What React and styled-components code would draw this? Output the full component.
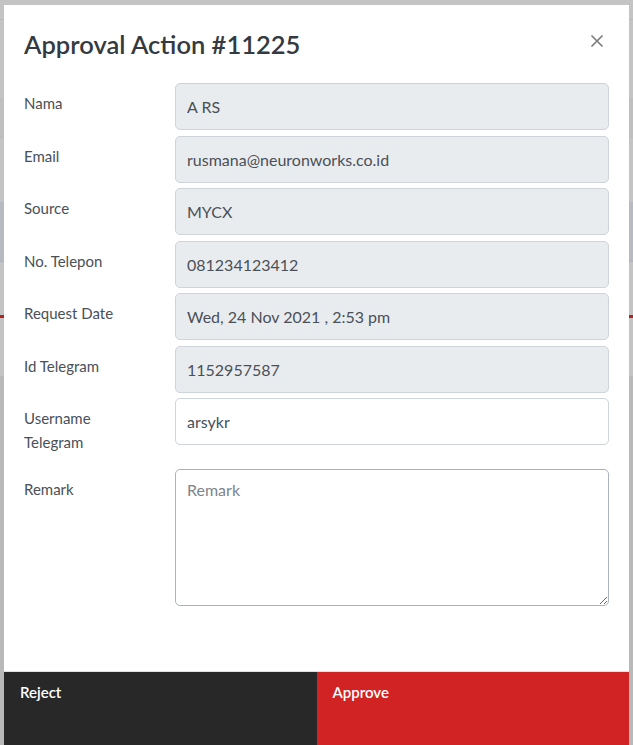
import React from "react";
import styled, { createGlobalStyle } from "styled-components";

const GlobalStyle = createGlobalStyle`
  html, body {
    margin: 0;
    padding: 0;
    background: #c4c4c4;
    font-family: Lato, "Open Sans", sans-serif;
    overflow: hidden;
  }
`;

// page behind the modal, seen through the backdrop
const Page = styled.div`
  height: 745px;
  display: flex;
  flex-direction: column;
`;

const Band = styled.div`
  height: ${(p) => p.h}px;
  background: ${(p) => p.bg || "#c4c4c4"};
  border-bottom: ${(p) => (p.line ? `${p.lineW || 1}px solid ${p.line}` : "none")};
  flex-shrink: 0;
`;

const Overlay = styled.div`
  position: fixed;
  top: 5px;
  left: 4px;
  width: 625px;
  bottom: -20px;
  background: #fff;
  display: flex;
  flex-direction: column;
`;

const Header = styled.div`
  display: flex;
  justify-content: space-between;
  align-items: flex-start;
  padding: 24px 20px 0 20px;
`;

const Title = styled.h2`
  margin: 0;
  font-size: 25.5px;
  line-height: 31px;
  font-weight: 600;
  color: #343a40;
`;

const CloseButton = styled.button`
  border: none;
  background: transparent;
  padding: 0;
  margin: 5px 5px 0 0;
  width: 14px;
  height: 14px;
  cursor: pointer;
  display: flex;
`;

const Body = styled.div`
  padding: 23px 20px 0 20px;
  display: flex;
  flex-direction: column;
  gap: 5.5px;
  flex: 1;
`;

const Row = styled.div`
  display: flex;
  align-items: flex-start;
`;

const Label = styled.label`
  width: 151px;
  flex-shrink: 0;
  padding: 8px 30px 9px 0;
  box-sizing: border-box;
  font-size: 15px;
  line-height: 24px;
  color: #495057;
`;

const Field = styled.input`
  width: 434px;
  height: 47px;
  box-sizing: border-box;
  padding: 0 11px;
  border: 1px solid #ced4da;
  border-radius: 5px;
  background: ${(p) => (p.readOnly ? "#e9ecef" : "#fff")};
  font-family: inherit;
  font-size: 16px;
  color: #495057;
  outline: none;
`;

const Area = styled.textarea`
  width: 434px;
  height: 137px;
  box-sizing: border-box;
  padding: 8px 11px;
  border: 1px solid #a9b4be;
  border-radius: 5px;
  font-family: inherit;
  font-size: 16px;
  line-height: 24px;
  color: #495057;
  outline: none;
  &::placeholder {
    color: #7d858c;
  }
`;

const Footer = styled.div`
  display: flex;
  border-top: 1px solid #dee2e6;
  height: 93px;
  flex-shrink: 0;
`;

const ActionButton = styled.button`
  flex: 1;
  border: none;
  background: ${(p) => p.bg};
  color: #fff;
  font-family: inherit;
  font-size: 15px;
  font-weight: 600;
  line-height: 24px;
  text-align: left;
  padding: 8px 16px;
  display: flex;
  align-items: flex-start;
  cursor: pointer;
`;

const fields = [
  { label: "Nama", value: "A RS" },
  { label: "Email", value: "rusmana@neuronworks.co.id" },
  { label: "Source", value: "MYCX" },
  { label: "No. Telepon", value: "081234123412" },
  { label: "Request Date", value: "Wed, 24 Nov 2021 , 2:53 pm" },
  { label: "Id Telegram", value: "1152957587" },
];

export default function App() {
  return (
    <>
      <GlobalStyle />
      <Page>
        <Band h={19} line="#b9b9b9" />
        <Band h={78} />
        <Band h={41} bg="#bfbfbf" />
        <Band h={63} />
        <Band h={59} bg="#b7bac0" line="#aeb1b6" />
        <Band h={53} />
        <Band h={0} line="#b52222" lineW={3} />
        <Band h={58} />
        <Band h={370} bg="#b9b9b9" />
      </Page>
      <Overlay>
        <Header>
          <Title>Approval Action #11225</Title>
          <CloseButton aria-label="Close">
            <svg width="14" height="14" viewBox="0 0 14 14">
              <path d="M1.5 1.5 L12.5 12.5 M12.5 1.5 L1.5 12.5" stroke="#7a7a7a" strokeWidth="1.6" />
            </svg>
          </CloseButton>
        </Header>
        <Body>
          {fields.map((f) => (
            <Row key={f.label}>
              <Label>{f.label}</Label>
              <Field readOnly value={f.value} />
            </Row>
          ))}
          <Row>
            <Label>Username Telegram</Label>
            <Field defaultValue="arsykr" />
          </Row>
          <Row>
            <Label>Remark</Label>
            <Area placeholder="Remark" />
          </Row>
        </Body>
        <Footer>
          <ActionButton bg="#282828">Reject</ActionButton>
          <ActionButton bg="#d12323">Approve</ActionButton>
        </Footer>
      </Overlay>
    </>
  );
}
